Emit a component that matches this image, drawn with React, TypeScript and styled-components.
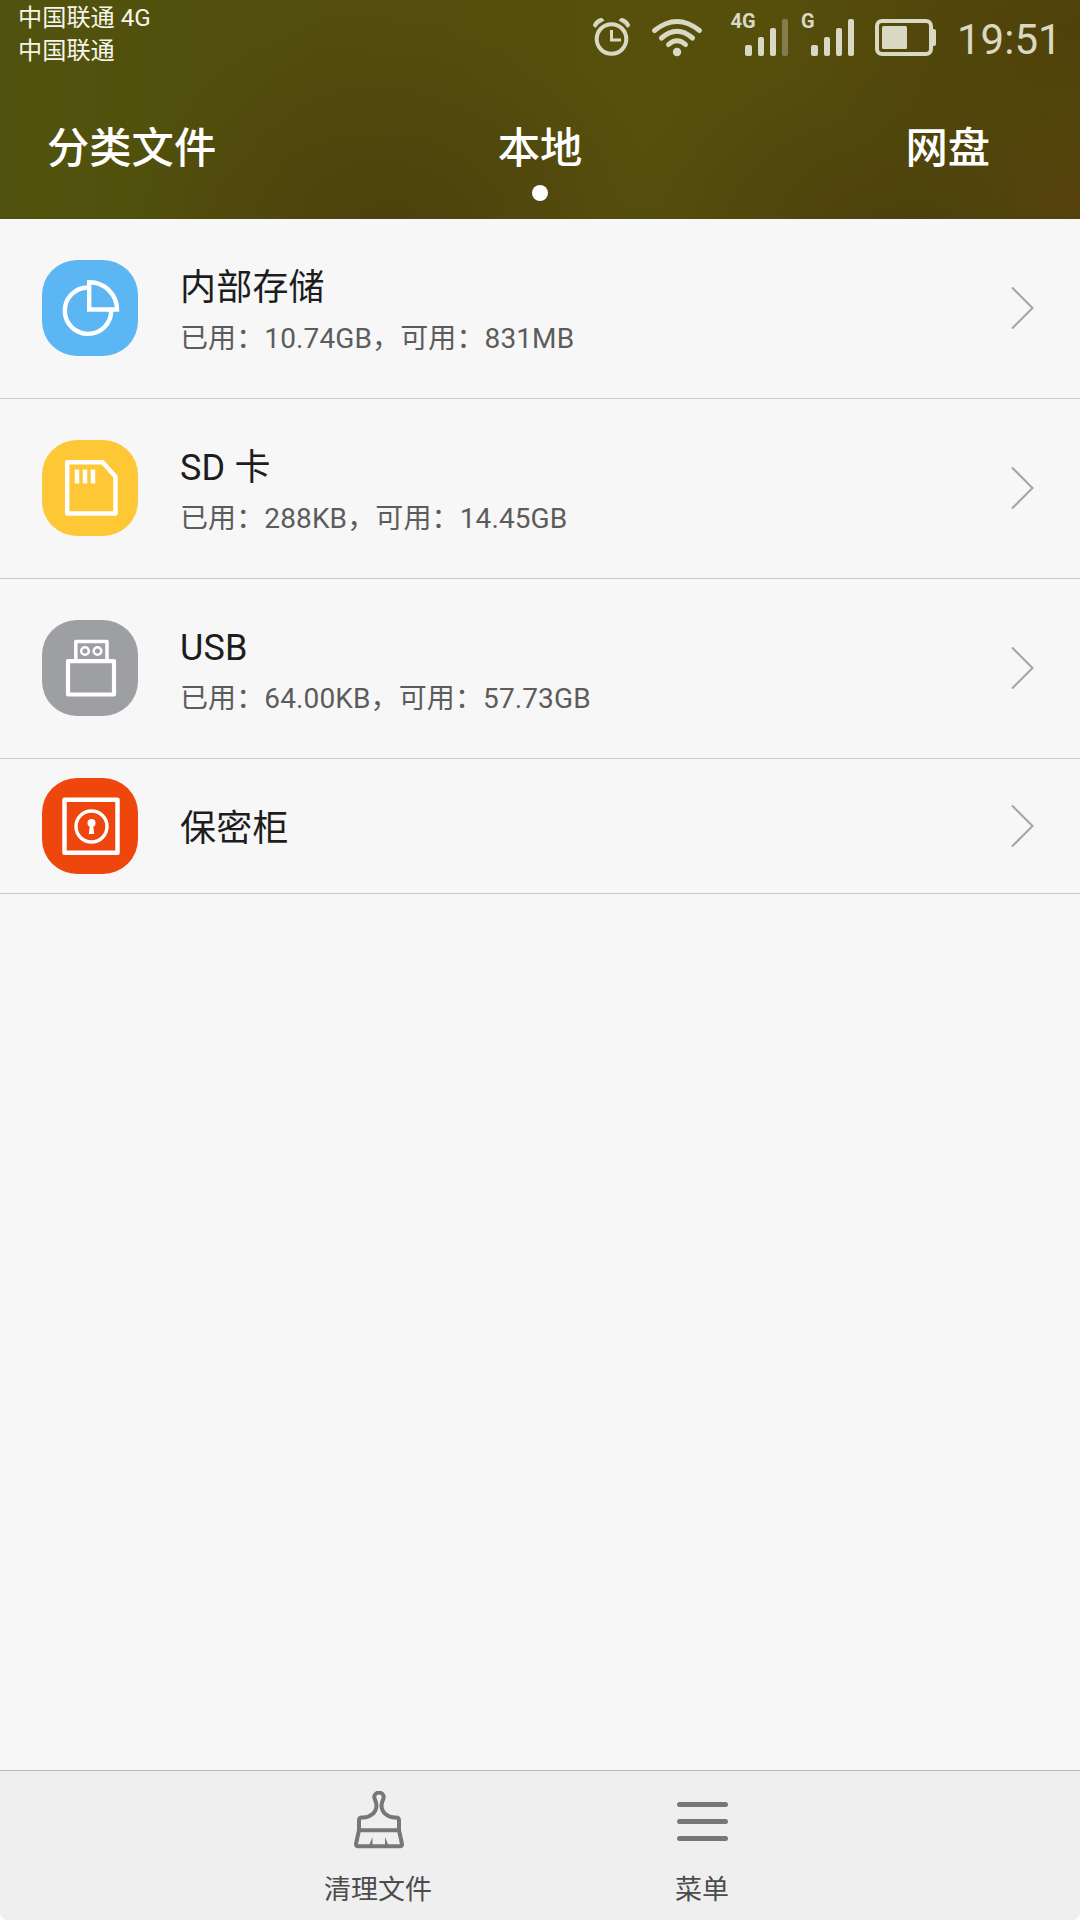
import React from "react";
import styled, { createGlobalStyle } from "styled-components";

const Global = createGlobalStyle`
  * { box-sizing: border-box; }
  html, body { margin: 0; padding: 0; background: #ffffff; }
  body { font-family: Roboto, "Noto Sans CJK SC", sans-serif; }
  svg { display: block; flex: none; }
`;

const Screen = styled.main`
  width: 1080px;
  height: 1920px;
  display: flex;
  flex-direction: column;
  overflow: hidden;
  background: #f7f7f7;
  border-radius: 0 0 8px 8px;
`;

const Header = styled.header`
  height: 219px;
  flex: none;
  display: flex;
  flex-direction: column;
  background:
    radial-gradient(ellipse 120px 110px at 1080px 200px, rgba(88, 64, 12, 0.8), rgba(88, 64, 12, 0)),
    radial-gradient(ellipse 300px 190px at 910px 235px, rgba(75, 64, 13, 0.95), rgba(75, 64, 13, 0)),
    radial-gradient(ellipse 280px 230px at 390px 240px, rgba(75, 64, 13, 0.95), rgba(75, 64, 13, 0)),
    radial-gradient(ellipse 300px 160px at 1080px 30px, rgba(78, 64, 10, 0.9), rgba(78, 64, 10, 0)),
    linear-gradient(90deg, #50530d 0, #534e0c 330px, #56500c 640px, #544b0b 1080px);
`;

const StatusBar = styled.div`
  height: 78px;
  display: flex;
  justify-content: space-between;
  padding: 0 17px 0 18px;
`;

const Carriers = styled.div`
  padding-top: 2px;
  font-size: 24.200px;
  line-height: 33px;
  color: #f5f5ea;
`;

const StatusIcons = styled.div`
  display: flex;
  height: 78px;
  color: #d9d8c3;
`;

const Clock = styled.time`
  width: 106px;
  font-size: 42px;
  line-height: 80px;
  margin-left: 20px;
  white-space: nowrap;
`;

const Tabs = styled.nav`
  height: 141px;
  display: grid;
  grid-template-columns: 1fr auto 1fr;
  padding: 40px 90px 0 47px;
`;

const Tab = styled.div<{ $align: string; $shift?: number }>`
  display: flex;
  flex-direction: column;
  align-items: center;
  justify-self: ${(p) => p.$align};
  margin-left: ${(p) => p.$shift ?? 0}px;
  font-size: 42.300px;
  line-height: 62px;
  font-weight: 500;
  color: #ffffff;
`;

const Dot = styled.span`
  width: 16px;
  height: 16px;
  margin-top: 5px;
  border-radius: 50%;
  background: #ffffff;
`;

const List = styled.section`
  flex: 1;
`;

const Row = styled.div<{ $height: number }>`
  height: ${(p) => p.$height}px;
  display: flex;
  align-items: center;
  padding: 0 46px 1px 42px;
  border-bottom: 1px solid #c9c9c9;
`;

const IconTile = styled.div<{ $color: string }>`
  width: 96px;
  height: 96px;
  border-radius: 35px;
  background: ${(p) => p.$color};
`;

const RowText = styled.div<{ $single: boolean }>`
  flex: 1;
  margin-left: 42px;
  padding-top: ${(p) => (p.$single ? 6 : 8)}px;
`;

const RowTitle = styled.div`
  font-size: 36px;
  line-height: 54px;
  letter-spacing: 0.2px;
  color: #1d1d1d;
`;

const RowInfo = styled.div`
  font-size: 28px;
  line-height: 48px;
  letter-spacing: 0.120px;
  color: #5c5c5c;
`;

const Toolbar = styled.footer`
  height: 150px;
  flex: none;
  display: flex;
  justify-content: center;
  border-top: 1px solid #b9b9b9;
  background: #efefef;
`;

const Action = styled.div`
  width: 324px;
  display: flex;
  flex-direction: column;
  align-items: center;
  padding-top: 20px;
  font-size: 27px;
  line-height: 40px;
  color: #4c4c4c;
`;

const ActionLabel = styled.span`
  margin-top: 21px;
`;

function StatusGlyphs() {
  return (
    <svg width="347" height="78" viewBox="590 0 347 78" fill="none" stroke="#d9d8c3">
      <circle cx="611.500" cy="39" r="14.800" strokeWidth="4" />
      <path d="M611.500 30v10h9.500" strokeWidth="3" />
      <g fill="#d9d8c3" stroke="#d9d8c3" strokeWidth="1" strokeLinejoin="round">
        <path d="M593.300 25.500Q595 19.500 601.500 18.300L604 20.300Q598.500 22.500 595.300 27.500Z" />
        <path d="M629.700 25.500Q628 19.500 621.500 18.300L619 20.300Q624.500 22.500 627.700 27.500Z" />
      </g>
      <g strokeWidth="5" strokeLinecap="round">
        <path d="M654.500 30.500Q677 12.500 699.500 30.500" />
        <path d="M661.500 38Q677 24.500 692.500 38" />
        <path d="M668.500 44.500Q677 37 685.500 44.500" />
      </g>
      <circle cx="677" cy="52" r="4.200" fill="#d9d8c3" stroke="none" />
      <g fill="#d9d8c3" stroke="none">
        <text x="730.500" y="27.700" fontSize="20" fontWeight="700" fontFamily="Roboto, sans-serif">4G</text>
        <rect x="745" y="45" width="7" height="11" rx="2" />
        <rect x="758" y="37" width="6" height="19" rx="2" />
        <rect x="770" y="28" width="6" height="28" rx="2" />
        <rect x="782" y="19" width="6" height="37" rx="2" opacity="0.35" />
        <text x="801" y="27.700" fontSize="20" fontWeight="700" fontFamily="Roboto, sans-serif">G</text>
        <rect x="811" y="45" width="7" height="11" rx="2" />
        <rect x="824" y="37" width="6" height="19" rx="2" />
        <rect x="836" y="28" width="6" height="28" rx="2" />
        <rect x="848" y="19" width="6" height="37" rx="2" />
        <rect x="882" y="26" width="25" height="23" rx="1.500" />
        <path d="M932 29h2q2 0 2 2v13q0 2-2 2h-2z" />
      </g>
      <rect x="877" y="21" width="54" height="33" rx="5" strokeWidth="4" />
    </svg>
  );
}

const PieIcon = () => (
  <svg width="96" height="96" fill="none" stroke="#fff" strokeWidth="4.400">
    <path d="M46 27.500A23.200 23.200 0 1 0 69.200 50.500" />
    <path d="M47.200 22.200V49.500H75A27.500 27.500 0 0 0 47.200 22.200Z" />
  </svg>
);

const SdIcon = () => (
  <svg width="96" height="96" fill="none" stroke="#fff" strokeWidth="4.500" strokeLinejoin="round">
    <path d="M25.200 22.200H60.500L73.500 36.500V73.500H25.200Z" />
    <path d="M35 29.500v14M43 29.500v14M51 29.500v14" strokeWidth="4.500" />
  </svg>
);

const UsbIcon = () => (
  <svg width="96" height="96" fill="none" stroke="#fff" strokeWidth="4.200" strokeLinejoin="round">
    <path d="M33.800 41V21.500H65V41" strokeWidth="3.500" />
    <rect x="26" y="41.200" width="46" height="33.300" />
    <circle cx="43" cy="31" r="3.800" strokeWidth="2.600" />
    <circle cx="55.500" cy="31" r="3.800" strokeWidth="2.600" />
  </svg>
);

const SafeIcon = () => (
  <svg width="96" height="96" fill="none" stroke="#fff" strokeWidth="4.500" strokeLinejoin="round">
    <rect x="22.500" y="21.700" width="53" height="53" />
    <circle cx="49.500" cy="48.500" r="15.500" strokeWidth="3.400" />
    <circle cx="49.500" cy="45" r="4" fill="#fff" stroke="none" />
    <path d="M48.200 45h2.600l1.400 11h-5.400z" fill="#fff" stroke="none" />
  </svg>
);

const Chevron = () => (
  <svg width="23" height="44" fill="none" stroke="#a4a4a4" strokeWidth="2">
    <path d="M1 1.500L21.500 22L1 42.500" />
  </svg>
);

const BrushIcon = () => (
  <svg width="52" height="58" viewBox="-2 0 52 58" fill="none" stroke="#777" strokeWidth="4" strokeLinejoin="round">
    <path d="M5 39V29.500Q5 26.500 8 26.500C16 27 22.500 21.500 22.500 14.500C22.500 10.500 20.300 8.500 20.300 6.300A4.700 4.700 0 0 1 29.700 6.300C29.700 8.500 27.500 10.500 27.500 14.500C27.500 21.500 34 27 42 26.500Q45 26.500 45 29.500V39" />
    <path d="M5 39.300H45L48 53Q48.200 55.300 46 55.300H4Q1.800 55.300 2 53Z" />
    <path d="M18.500 46V54.500H15ZM31 46V54.500H34.500Z" fill="#777" stroke="none" />
  </svg>
);

const MenuIcon = () => (
  <svg width="51" height="58" stroke="#777" strokeWidth="5" strokeLinecap="round">
    <path d="M2.500 13.500H48.500M2.500 30.500H48.500M2.500 47.500H48.500" />
  </svg>
);

const items = [
  { title: "内部存储", info: "已用：10.74GB，可用：831MB", color: "#5bb6f3", Icon: PieIcon },
  { title: "SD 卡", info: "已用：288KB，可用：14.45GB", color: "#fec735", Icon: SdIcon },
  { title: "USB", info: "已用：64.00KB，可用：57.73GB", color: "#9e9fa3", Icon: UsbIcon },
  { title: "保密柜", info: "", color: "#ef460e", Icon: SafeIcon },
];

export default function App() {
  return (
    <Screen lang="zh-CN">
      <Global />
      <Header>
        <StatusBar>
          <Carriers>
            <div>中国联通 4G</div>
            <div>中国联通</div>
          </Carriers>
          <StatusIcons>
            <StatusGlyphs />
            <Clock>19:51</Clock>
          </StatusIcons>
        </StatusBar>
        <Tabs>
          <Tab $align="start">分类文件</Tab>
          <Tab $align="center" $shift={43}>本地<Dot /></Tab>
          <Tab $align="end">网盘</Tab>
        </Tabs>
      </Header>
      <List>
        {items.map(({ title, info, color, Icon }) => (
          <Row key={title} $height={info ? 180 : 135}>
            <IconTile $color={color}><Icon /></IconTile>
            <RowText $single={!info}>
              <RowTitle>{title}</RowTitle>
              {info && <RowInfo>{info}</RowInfo>}
            </RowText>
            <Chevron />
          </Row>
        ))}
      </List>
      <Toolbar>
        <Action><BrushIcon /><ActionLabel>清理文件</ActionLabel></Action>
        <Action><MenuIcon /><ActionLabel>菜单</ActionLabel></Action>
      </Toolbar>
    </Screen>
  );
}
